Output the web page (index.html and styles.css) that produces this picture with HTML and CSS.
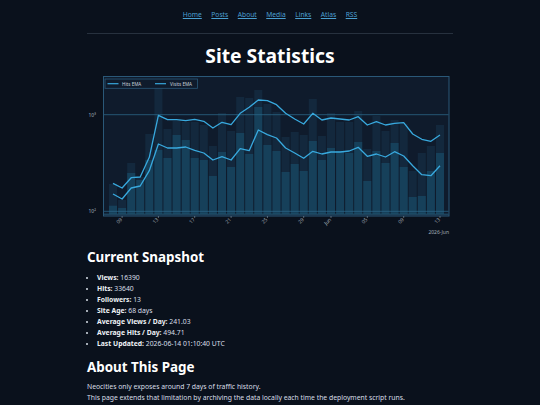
FILE: index.html
```html
<!DOCTYPE html>
<html lang="en">
<head>
<meta charset="utf-8">
<title>Site Statistics</title>
<link rel="stylesheet" href="styles.css">
</head>
<body>
<div class="page">
  <nav class="nav">
    <a href="#">Home</a>
    <a href="#">Posts</a>
    <a href="#">About</a>
    <a href="#">Media</a>
    <a href="#">Links</a>
    <a href="#">Atlas</a>
    <a href="#">RSS</a>
  </nav>
  <hr class="rule">
  <h1 class="title">Site Statistics</h1>
  <svg class="chart" width="366" height="166" viewBox="87 73 366 166" xmlns="http://www.w3.org/2000/svg">
    <rect x="103.5" y="76.5" width="345.5" height="139.5" fill="#0f1b2c" stroke="#2a5878" stroke-width="1"/>
    <g fill="#13283d">
      <rect x="109" y="184" width="8" height="30"/><rect x="118.1" y="200" width="8" height="14"/><rect x="127.2" y="163" width="8" height="51"/><rect x="136.2" y="177" width="8" height="37"/><rect x="145.3" y="134" width="8" height="80"/><rect x="154.4" y="80" width="8" height="134"/><rect x="163.5" y="129" width="8" height="85"/><rect x="172.6" y="121" width="8" height="93"/><rect x="181.7" y="122" width="8" height="92"/><rect x="190.7" y="122" width="8" height="92"/><rect x="199.8" y="125" width="8" height="89"/><rect x="208.9" y="146" width="8" height="68"/><rect x="218" y="113" width="8" height="101"/><rect x="227.1" y="131" width="8" height="83"/><rect x="236.2" y="97" width="8" height="117"/><rect x="245.2" y="98" width="8" height="116"/><rect x="254.3" y="90" width="8" height="124"/><rect x="263.4" y="104" width="8" height="110"/><rect x="272.5" y="112" width="8" height="102"/><rect x="281.6" y="137" width="8" height="77"/><rect x="290.7" y="132" width="8" height="82"/><rect x="299.7" y="135" width="8" height="79"/><rect x="308.8" y="99" width="8" height="115"/><rect x="317.9" y="136" width="8" height="78"/><rect x="327" y="113" width="8" height="101"/><rect x="336.1" y="122" width="8" height="92"/><rect x="345.2" y="122" width="8" height="92"/><rect x="354.2" y="111" width="8" height="103"/><rect x="363.3" y="149" width="8" height="65"/><rect x="372.4" y="116" width="8" height="98"/><rect x="381.5" y="131" width="8" height="83"/><rect x="390.6" y="120" width="8" height="94"/><rect x="399.7" y="124" width="8" height="90"/><rect x="408.7" y="171" width="8" height="43"/><rect x="417.8" y="153" width="8" height="61"/><rect x="426.9" y="146" width="8" height="68"/><rect x="436" y="125" width="8" height="89"/>
    </g>
    <g fill="#16405a">
      <rect x="109" y="205.7" width="8" height="8.3"/><rect x="118.1" y="208" width="8" height="6"/><rect x="127.2" y="173" width="8" height="41"/><rect x="136.2" y="180" width="8" height="34"/><rect x="145.3" y="160" width="8" height="54"/><rect x="154.4" y="150" width="8" height="64"/><rect x="163.5" y="158" width="8" height="56"/><rect x="172.6" y="135" width="8" height="79"/><rect x="181.7" y="140" width="8" height="74"/><rect x="190.7" y="158" width="8" height="56"/><rect x="199.8" y="160" width="8" height="54"/><rect x="208.9" y="176" width="8" height="38"/><rect x="218" y="152" width="8" height="62"/><rect x="227.1" y="167" width="8" height="47"/><rect x="236.2" y="133" width="8" height="81"/><rect x="245.2" y="154" width="8" height="60"/><rect x="254.3" y="107" width="8" height="107"/><rect x="263.4" y="145" width="8" height="69"/><rect x="272.5" y="151" width="8" height="63"/><rect x="281.6" y="172" width="8" height="42"/><rect x="290.7" y="164" width="8" height="50"/><rect x="299.7" y="171" width="8" height="43"/><rect x="308.8" y="141" width="8" height="73"/><rect x="317.9" y="160" width="8" height="54"/><rect x="327" y="148" width="8" height="66"/><rect x="336.1" y="151" width="8" height="63"/><rect x="345.2" y="153" width="8" height="61"/><rect x="354.2" y="142" width="8" height="72"/><rect x="363.3" y="181" width="8" height="33"/><rect x="372.4" y="151" width="8" height="63"/><rect x="381.5" y="163" width="8" height="51"/><rect x="390.6" y="143" width="8" height="71"/><rect x="399.7" y="167" width="8" height="47"/><rect x="408.7" y="197" width="8" height="17"/><rect x="417.8" y="196" width="8" height="18"/><rect x="426.9" y="171" width="8" height="43"/><rect x="436" y="153" width="8" height="61"/>
    </g>
    <g stroke="#2b6587" stroke-width="0.8">
      <line x1="104" y1="114.7" x2="448.5" y2="114.7"/>
      <line x1="104" y1="211.3" x2="448.5" y2="211.3"/>
      <line x1="104" y1="214.2" x2="448.5" y2="214.2"/>
    </g>
    <g fill="none" stroke="#38a9de" stroke-width="1.3" stroke-linejoin="round">
      <polyline points="113,183.3 122.1,188 131.2,177.7 140.2,177 149.3,157.3 158.4,115.3 167.5,119.7 176.6,119.7 185.7,120.7 194.7,119.3 203.8,121.3 212.9,128 222,122.3 231.1,124.7 240.2,113.3 249.2,107.3 258.3,100 267.4,100.7 276.5,104.7 285.6,113.3 294.7,119 303.7,124 312.8,113.3 321.9,120 331,118 340.1,119 349.2,120 358.2,116.7 367.3,125 376.4,121.7 385.5,125 394.6,123.3 403.7,122.7 412.7,134 421.8,139.3 430.9,141.3 440,135"/>
      <polyline points="113,194 122.1,199 131.2,188 140.2,186 149.3,170.7 158.4,144 167.5,148 176.6,148 185.7,147 194.7,150.3 203.8,153 212.9,160 222,156.7 231.1,160 240.2,148.7 249.2,150.7 258.3,130 267.4,134.7 276.5,138 285.6,148 294.7,153 303.7,158.3 312.8,151.3 321.9,154 331,152 340.1,152 349.2,151 358.2,147.3 367.3,156.3 376.4,154 385.5,157 394.6,151.7 403.7,156 412.7,165.7 421.8,174.7 430.9,175.7 440,165.7"/>
    </g>
    <rect x="105" y="79" width="92.5" height="9.3" fill="#0f1b2c" stroke="#2a5878" stroke-width="0.8"/>
    <g stroke="#38a9de" stroke-width="1.2">
      <line x1="107.5" y1="83.7" x2="118.5" y2="83.7"/>
      <line x1="155" y1="83.7" x2="166" y2="83.7"/>
    </g>
    <g class="legend-text">
      <text x="122" y="85.5">Hits EMA</text>
      <text x="170" y="85.5">Visits EMA</text>
    </g>
    <g class="axis-text">
      <text x="88.5" y="116.5">10³</text>
      <text x="88.5" y="213">10²</text>
    </g>
    <g stroke="#8a97a5" stroke-width="0.6">
      <line x1="122.1" y1="216" x2="122.1" y2="218"/><line x1="158.4" y1="216" x2="158.4" y2="218"/><line x1="194.7" y1="216" x2="194.7" y2="218"/><line x1="231.1" y1="216" x2="231.1" y2="218"/><line x1="267.4" y1="216" x2="267.4" y2="218"/><line x1="303.7" y1="216" x2="303.7" y2="218"/><line x1="331" y1="216" x2="331" y2="218"/><line x1="367.3" y1="216" x2="367.3" y2="218"/><line x1="403.7" y1="216" x2="403.7" y2="218"/><line x1="440" y1="216" x2="440" y2="218"/>
    </g>
    <g class="axis-text tick">
      <text transform="translate(122.6,220) rotate(-45)">09</text>
      <text transform="translate(158.9,220) rotate(-45)">13</text>
      <text transform="translate(195.2,220) rotate(-45)">17</text>
      <text transform="translate(231.6,220) rotate(-45)">21</text>
      <text transform="translate(267.9,220) rotate(-45)">25</text>
      <text transform="translate(304.2,220) rotate(-45)">29</text>
      <text transform="translate(331.5,220) rotate(-45)">Jun</text>
      <text transform="translate(367.8,220) rotate(-45)">05</text>
      <text transform="translate(404.2,220) rotate(-45)">09</text>
      <text transform="translate(440.5,220) rotate(-45)">13</text>
    </g>
    <text class="axis-text" x="449" y="234" text-anchor="end">2026-Jun</text>
  </svg>
  <h2 class="section">Current Snapshot</h2>
  <ul class="stats">
    <li><b>Views:</b> 16390</li>
    <li><b>Hits:</b> 33640</li>
    <li><b>Followers:</b> 13</li>
    <li><b>Site Age:</b> 68 days</li>
    <li><b>Average Views / Day:</b> 241.03</li>
    <li><b>Average Hits / Day:</b> 494.71</li>
    <li><b>Last Updated:</b> 2026-06-14 01:10:40 UTC</li>
  </ul>
  <h2 class="section">About This Page</h2>
  <p class="note">Neocities only exposes around 7 days of traffic history.</p>
  <p class="note">This page extends that limitation by archiving the data locally each time the deployment script runs.</p>
</div>
</body>
</html>
```

FILE: styles.css
```css
html, body {
  margin: 0;
  padding: 0;
}

body {
  background: #0a111c;
  color: #d9dfe7;
  font-family: "Noto Sans", "Open Sans", sans-serif;
  font-size: 6.8px;
  line-height: 11px;
}

.page {
  width: 366px;
  margin: 0 auto;
}

.nav {
  display: flex;
  justify-content: center;
  gap: 9.5px;
  padding-top: 9px;
  height: 11px;
}

.nav a {
  color: #4b9fd0;
  text-decoration: underline;
  font-size: 6.7px;
  line-height: 11px;
}

.rule {
  border: 0;
  border-top: 1px solid #27313e;
  margin: 13px 0 0;
  height: 0;
}

.title {
  margin: 8px 0 0;
  text-align: center;
  font-size: 19.3px;
  line-height: 28px;
  font-weight: 700;
  color: #ffffff;
}

.chart {
  display: block;
  margin-top: 3px;
}

.legend-text {
  font-family: "Noto Sans", sans-serif;
  font-size: 4.6px;
  fill: #c9d3dd;
}

.axis-text {
  font-family: "Noto Sans", sans-serif;
  font-size: 5px;
  fill: #a3adb8;
}

.tick text {
  text-anchor: end;
}

.section {
  margin: 8px 0 0;
  font-size: 13.4px;
  line-height: 20px;
  font-weight: 700;
  color: #ffffff;
}

.stats {
  margin: 5px 0 3px;
  padding-left: 10px;
}

.stats li {
  line-height: 11px;
}

.stats b {
  font-weight: 700;
  color: #eef2f6;
}

.section + .note {
  margin-top: 4px;
}

.note {
  margin: 0;
  line-height: 11px;
}
```
